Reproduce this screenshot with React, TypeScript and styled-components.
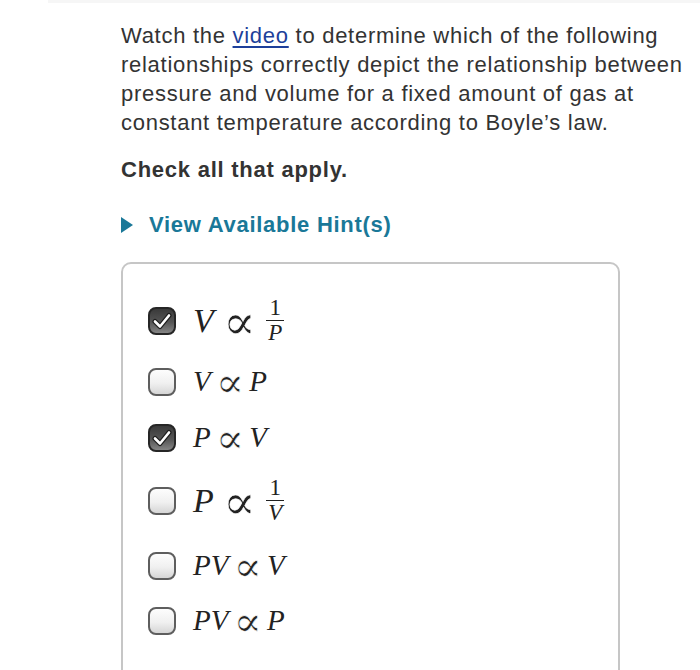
import React from "react";
import styled, { createGlobalStyle } from "styled-components";

const Global = createGlobalStyle`
  html, body { margin: 0; padding: 0; background: #fff; }
  body { font-family: "Liberation Sans", Arial, sans-serif; }
`;

const Page = styled.div`
  width: 700px;
  height: 670px;
  overflow: hidden;
  background: #fff;
`;

const TopStrip = styled.div`
  height: 3px;
  margin-left: 48px;
  background: #f6f6f6;
`;

const Content = styled.div`
  padding: 18px 0 0 121px;
  width: 575px;
  color: #333;
`;

const Prompt = styled.p`
  margin: 0;
  font-size: 22px;
  line-height: 29px;
  letter-spacing: 0.72px;
  color: #333;
`;

const Link = styled.a`
  color: #1d3f9a;
  text-decoration: underline;
  text-underline-offset: 3px;
`;

const Instruction = styled.p`
  margin: 18px 0 0;
  font-size: 22px;
  line-height: 29px;
  letter-spacing: 0.75px;
  font-weight: bold;
  color: #333;
`;

const HintToggle = styled.div`
  margin-top: 26px;
  display: flex;
  align-items: center;
  gap: 16px;
  font-size: 22px;
  line-height: 29px;
  letter-spacing: 0.73px;
  font-weight: bold;
  color: #1a7898;
`;

const Triangle = styled.span`
  width: 0;
  height: 0;
  margin-top: 1px;
  border-top: 8px solid transparent;
  border-bottom: 8px solid transparent;
  border-left: 12px solid #1a7898;
`;

const AnswerBox = styled.div`
  margin-top: 23px;
  width: 499px;
  height: 420px;
  box-sizing: border-box;
  border: 2px solid #c6c6c6;
  border-radius: 10px;
  padding: 24px 0 0 25px;
`;

const Row = styled.div<{ $h: number }>`
  height: ${(p) => p.$h}px;
  display: flex;
  align-items: center;
  gap: 17px;
`;

const Box = styled.span<{ $checked: boolean }>`
  width: 28px;
  height: 28px;
  box-sizing: border-box;
  flex: none;
  border-radius: 8px;
  border: 2px solid ${(p) => (p.$checked ? "#262626" : "#5e5e5e")};
  background: ${(p) =>
    p.$checked
      ? "linear-gradient(#3a3a3a, #555 55%, #858585)"
      : "linear-gradient(#fdfdfd, #f0f0f0 55%, #d6d6d6)"};
  display: flex;
  align-items: center;
  justify-content: center;
`;

const Math = styled.span<{ $size: number }>`
  display: inline-flex;
  align-items: center;
  font-family: "Liberation Serif", "DejaVu Serif", serif;
  font-size: ${(p) => p.$size}px;
  line-height: 1.1;
  color: #222;
`;

const Var = styled.i`
  font-style: italic;
`;

const Op = styled.span<{ $space: number }>`
  font-family: "Liberation Serif", "DejaVu Serif", serif;
  font-style: normal;
  font-size: 1.45em;
  line-height: 1;
  color: #222;
  -webkit-text-stroke: 0.6px #fff;
  margin: 3px ${(p) => p.$space}px 0;
`;

const Frac = styled.span`
  display: inline-flex;
  flex-direction: column;
  align-items: center;
  font-size: 23px;
  line-height: 22px;
`;

const Num = styled.span`
  padding: 0 3px 1px;
  border-bottom: 1.5px solid #222;
`;

const Den = styled.i`
  padding: 1px 3px 0;
`;

const Check = () => (
  <svg width="20" height="18" viewBox="0 0 20 18">
    <path d="M3 9.5 L8 14.5 L17 3.5" fill="none" stroke="#1e1e1e" strokeWidth="5" strokeLinecap="round" strokeLinejoin="round" />
    <path d="M3 9.5 L8 14.5 L17 3.5" fill="none" stroke="#fff" strokeWidth="2.6" strokeLinecap="round" strokeLinejoin="round" />
  </svg>
);

type Item = { checked: boolean; h: number; size: number; render: () => React.ReactNode };

const items: Item[] = [
  {
    checked: true,
    h: 66,
    size: 34,
    render: () => (
      <>
        <Var>V</Var>
        <Op $space={9}>∝</Op>
        <Frac>
          <Num>1</Num>
          <Den>P</Den>
        </Frac>
      </>
    ),
  },
  {
    checked: false,
    h: 56,
    size: 29,
    render: () => (
      <>
        <Var>V</Var>
        <Op $space={5}>∝</Op>
        <Var>P</Var>
      </>
    ),
  },
  {
    checked: true,
    h: 56,
    size: 29,
    render: () => (
      <>
        <Var>P</Var>
        <Op $space={5}>∝</Op>
        <Var>V</Var>
      </>
    ),
  },
  {
    checked: false,
    h: 70,
    size: 34,
    render: () => (
      <>
        <Var>P</Var>
        <Op $space={9}>∝</Op>
        <Frac>
          <Num>1</Num>
          <Den>V</Den>
        </Frac>
      </>
    ),
  },
  {
    checked: false,
    h: 60,
    size: 29,
    render: () => (
      <>
        <Var>PV</Var>
        <Op $space={5}>∝</Op>
        <Var>V</Var>
      </>
    ),
  },
  {
    checked: false,
    h: 50,
    size: 29,
    render: () => (
      <>
        <Var>PV</Var>
        <Op $space={5}>∝</Op>
        <Var>P</Var>
      </>
    ),
  },
];

export default function App() {
  return (
    <Page>
      <Global />
      <TopStrip />
      <Content>
        <Prompt>
          Watch the <Link href="#">video</Link> to determine which of the following relationships correctly
          depict the relationship between pressure and volume for a fixed amount of gas at constant
          temperature according to Boyle’s law.
        </Prompt>
        <Instruction>Check all that apply.</Instruction>
        <HintToggle>
          <Triangle />
          View Available Hint(s)
        </HintToggle>
        <AnswerBox>
          {items.map((it, i) => (
            <Row key={i} $h={it.h}>
              <Box $checked={it.checked}>{it.checked && <Check />}</Box>
              <Math $size={it.size}>{it.render()}</Math>
            </Row>
          ))}
        </AnswerBox>
      </Content>
    </Page>
  );
}
